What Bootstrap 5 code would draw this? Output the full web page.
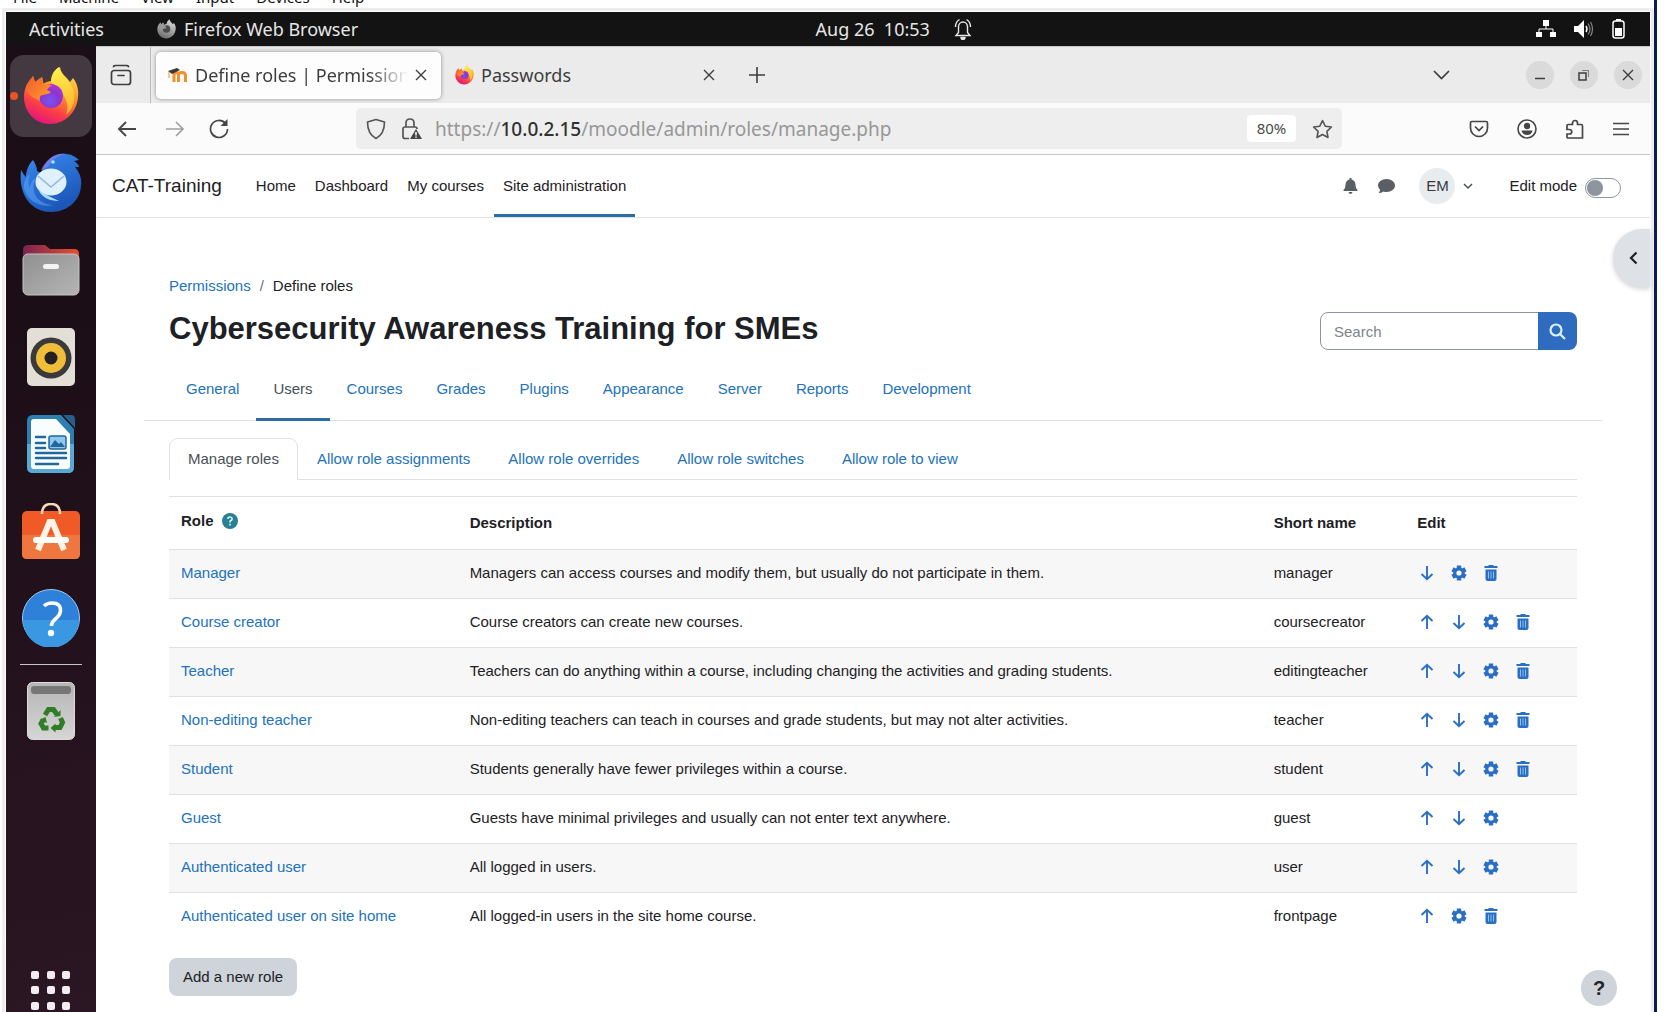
<!DOCTYPE html>
<html lang="en">
<head>
<meta charset="utf-8">
<meta name="viewport" content="width=device-width, initial-scale=1">
<title>Define roles | Permissions</title>
<link href="https://cdn.jsdelivr.net/npm/bootstrap@5.3.0/dist/css/bootstrap.min.css" rel="stylesheet">
<style>
  :root { --ui: "Noto Sans", "Open Sans", sans-serif; --page: "Liberation Sans", Arial, sans-serif; --brand: #2272bd; --line: #dee2e6; }
  body { font-family: var(--page); font-size: 15px; line-height: 22px; color: #1d2125; background: #fff; }
  svg { display: block; flex: none; }
  button { border: 0; background: none; padding: 0; color: inherit; }
  a { color: var(--brand); text-decoration: none; }

  /* virtual machine window */
  .vm { height: 100vh; margin: 0 7px 0 2px; border-right: 3px solid #0a1a55; overflow: hidden; }
  .vm-menu { height: 8px; padding-left: 11px; gap: 22px; font: 15px/22px var(--ui); }
  .vm-menu a { color: #111; }
  .vm-screen { min-height: 0; border: 3px solid #ededf0; border-bottom: 0; padding: 1px 1px 0; }

  /* desktop */
  .topbar { height: 34px; background: #131313; color: #e6e6e6; font: 18px/24px var(--ui); padding: 0 25px 0 23px; }
  .topbar .appname { margin-left: 53px; }
  .topbar .clock { left: 49%; gap: 24px; }
  .topbar .status { gap: 18px; }
  .dock { width: 90px; background: linear-gradient(170deg, #1c0e17 30%, #2b1623); padding-top: 9px; gap: 5px; }
  .dock a { width: 82px; height: 82px; border-radius: 14px; flex: none; position: relative; }
  .dock a.running { background: #443940; }
  .dock a.running::before { content: ""; position: absolute; left: 0; top: 37px; width: 8px; height: 8px; border-radius: 50%; background: #e95420; }
  .dock hr { width: 62px; height: 1px; margin: 0; border: 0; background: #c9c4c7; opacity: 1; flex: none; }
  .dock .apps { margin-top: auto; margin-bottom: -3px; height: 48px; }
  .workspace { min-height: 0; }
  .browser { min-width: 0; }

  /* browser */
  .tabstrip { height: 57px; background: #ebebeb; color: #3d3d3d; font: 18px/24px var(--ui); border-top: 1px solid #c8c8c8; }
  .tabstrip .overview { width: 55px; height: 100%; border-right: 1px solid #bdbdbd; padding-right: 4px; }
  .btab { height: 47px; border-radius: 5px; padding: 0 14px 0 12px; gap: 7px; }
  .btab.current { background: #fdfdfd; box-shadow: 0 0 4px rgba(0,0,0,.4); width: 285px; margin-left: 5px; }
  .btab.other { width: 288px; padding: 0 18px 0 10px; }
  .fade-text { overflow: hidden; white-space: nowrap; -webkit-mask-image: linear-gradient(90deg, #000 82%, transparent); mask-image: linear-gradient(90deg, #000 82%, transparent); }
  .winbtn { width: 28px; height: 28px; border-radius: 50%; background: #dadada; }
  .toolbar { height: 52px; background: #fbfbfb; border-bottom: 1px solid #c6c6c6; color: #464646; padding: 0 21px; }
  .urlbar { height: 41px; background: #eee; border-radius: 5px; width: 986px; font: 19px/24px var(--ui); color: #979797; padding: 0 9px 0 10px; }
  .urlbar .address { padding-left: 13px; }
  .urlbar b { font-weight: 500; color: #303030; }
  .zoomlevel { height: 27px; width: 49px; border-radius: 4px; background: #fff; color: #4b4b4b; font: 15px/27px var(--ui); }

  /* site */
  .site { min-height: 0; background: #fff; position: relative; }
  .sitenav { height: 63px; border-bottom: 1px solid var(--line); padding: 0 29px 0 16px; }
  .sitenav .brand { color: #1d2125; font-size: 19px; margin-right: 25px; }
  .sitenav .menu { gap: 1px; }
  .sitenav .menu a { color: #1d2125; padding: 0 9px; border-bottom: 3px solid transparent; border-top: 3px solid transparent; }
  .sitenav .menu a.active { border-bottom-color: #2e6da4; }
  .avatar { width: 36px; height: 36px; border-radius: 50%; background: #e9ecef; color: #343a40; }
  .form-switch .form-check-input { width: 36px; height: 20px; margin: 4px 0 0; border-color: #8f959e; background-image: url("data:image/svg+xml,%3csvg xmlns='http://www.w3.org/2000/svg' viewBox='-4 -4 8 8'%3e%3ccircle r='3.6' fill='%238f959e'/%3e%3c/svg%3e"); }
  .pagebody { padding: 57px 73px 0; }
  .crumbs { --bs-breadcrumb-divider-color: #6a737b; --bs-breadcrumb-item-active-color: #1d2125; --bs-breadcrumb-item-padding-x: 9px; }
  .titlerow { margin: 12px 0 4px; }
  .pagetitle { font-size: 31px; line-height: 40px; font-weight: 700; }
  .finder { width: 257px; }
  .finder .form-control { height: 38px; font-size: 15px; border-color: #8f959e; border-radius: 8px; padding: 0 13px; }
  .finder .form-control::placeholder { color: #7d848b; }
  .finder .btn { width: 39px; background: #2f6bbf; color: #d8f2ff; border-radius: 8px; padding: 0; }
  .sections { margin: 0 -25px; padding-left: 25px; border-bottom: 1px solid var(--line); height: 64px; }
  .sections a { padding: 0 17px; border-top: 3px solid transparent; border-bottom: 3px solid transparent; margin-bottom: -1px; }
  .sections a.active { color: #495057; border-bottom-color: #2e6da4; }
  .roletabs { margin-top: 17px; --bs-nav-tabs-border-radius: 9px; --bs-nav-link-padding-x: 18px; --bs-nav-link-padding-y: 9px; --bs-nav-link-color: var(--brand); --bs-nav-tabs-link-active-color: #495057; }
  .roles { margin: 16px 0 0; border-top: 1px solid var(--line); table-layout: fixed; --bs-table-color: #1d2125; --bs-table-striped-color: #1d2125; --bs-table-striped-bg: #f7f7f7; --bs-table-bg: transparent; }
  .roles th, .roles td { padding: 12px 12px 14px; border-color: var(--line); height: 49px; }
  .roles thead th { height: 53px; vertical-align: middle; padding-bottom: 12px; }
  .roles tbody tr:last-child > * { border-bottom: 0; }
  .roles .c1 { width: 20.5%; } .roles .c3 { width: 10.2%; } .roles .c4 { width: 12.2%; }
  .acts { gap: 12px; height: 22px; color: #2a6fc4; }
  .acts a { color: inherit; }
  .newrole { background: #ced4da; color: #1d2125; font-size: 15px; line-height: 22px; padding: 8px 14px; border-radius: 8px; border: 0; margin-top: 16px; }
  .drawer { position: absolute; right: 0; top: 74px; width: 37px; height: 58px; border-radius: 30px 0 0 30px; background: #dee2e6; box-shadow: 0 2px 5px rgba(0,0,0,.18); padding-left: 4px; }
  .helpbtn { position: absolute; right: 33px; bottom: 6px; width: 36px; height: 36px; border-radius: 50%; background: #ced4da; font-size: 20px; font-weight: 700; color: #22262a; }
</style>
<script src="https://cdn.jsdelivr.net/npm/bootstrap@5.3.0/dist/js/bootstrap.bundle.min.js" defer></script>
</head>
<body>
<svg width="0" height="0" class="position-absolute" aria-hidden="true">
  <defs>
    <linearGradient id="ffBody" x1=".8" y1="0" x2=".35" y2="1"><stop offset="0" stop-color="#ffe14a"/><stop offset=".4" stop-color="#ff9a2e"/><stop offset=".75" stop-color="#fb3d45"/><stop offset="1" stop-color="#e2167e"/></linearGradient>
    <linearGradient id="ffHead" x1="0" y1="0" x2="1" y2="1"><stop offset="0" stop-color="#f4582f"/><stop offset="1" stop-color="#ffa22b"/></linearGradient>
    <linearGradient id="ffFlame" x1=".5" y1="0" x2=".6" y2="1"><stop offset="0" stop-color="#fff04d"/><stop offset="1" stop-color="#ffb02c"/></linearGradient>
    <radialGradient id="ffGlobe" cx=".45" cy=".7" r=".7"><stop offset="0" stop-color="#7a53f0"/><stop offset=".6" stop-color="#8a35d0"/><stop offset="1" stop-color="#b833d8"/></radialGradient>
    <linearGradient id="grBody" x1=".7" y1="0" x2=".3" y2="1"><stop offset="0" stop-color="#ddd"/><stop offset="1" stop-color="#6a6a6a"/></linearGradient>
    <linearGradient id="tbBlue" x1="0" y1="0" x2=".5" y2="1"><stop offset="0" stop-color="#3b8cf0"/><stop offset="1" stop-color="#1b56b8"/></linearGradient>
    <linearGradient id="folder" x1="0" x2="1"><stop offset="0" stop-color="#7a2452"/><stop offset="1" stop-color="#e9502a"/></linearGradient>
    <linearGradient id="greyBox" x1="0" y1="0" x2="1" y2="1"><stop offset="0" stop-color="#909090"/><stop offset="1" stop-color="#b5b5b5"/></linearGradient>
    <linearGradient id="binBox" x1="0" y1="0" x2="0" y2="1"><stop offset="0" stop-color="#b5b5b5"/><stop offset="1" stop-color="#d6d6d6"/></linearGradient>
  </defs>
  <symbol id="firefox" viewBox="0 0 56 58">
    <path d="M1 30C1 22 4 16 8 12l2-3 2 6 7-5 1 7c3-2 6-3 8-3 1-6 4-11 9-14 1 7 6 9 10 15l3-4c4 5 6 12 5 19-1 15-13 27-28 27C13 57 1 46 1 30Z" fill="url(#ffBody)"/>
    <path d="M36 0c1 7 6 9 11 16 7 11 5 25-4 32 2-6 2-12-1-17-3-7-10-11-14-16 0-7 3-12 8-15Z" fill="url(#ffFlame)"/>
    <circle cx="28" cy="29" r="12" fill="url(#ffGlobe)"/>
    <path d="M3 20C5 15 8 12 10 9l2 6 7-5 2 8c3-1 5-1 8 1-2 0-4 2-5 4l4 2c-2 2-5 2-8 3-3 0-4 3-3 6-6-4-12-4-14-14Z" fill="url(#ffHead)"/>
  </symbol>
  <symbol id="firefox-grey" viewBox="0 0 56 58">
    <path d="M1 30C1 22 4 16 8 12l2-3 2 6 7-5 1 7c3-2 6-3 8-3 1-6 4-11 9-14 1 7 6 9 10 15l3-4c4 5 6 12 5 19-1 15-13 27-28 27C13 57 1 46 1 30Z" fill="url(#grBody)"/>
    <circle cx="28" cy="29" r="11" fill="#4b4b4b"/>
    <path d="M5 20l5-9 2 5 7-5 2 7c3-1 5-1 8 1-2 0-4 2-5 4l4 2c-2 2-5 2-8 3-6 4-15 0-15-8Z" fill="#999"/>
  </symbol>
  <symbol id="cross" viewBox="0 0 12 12"><path d="M1 1l10 10M11 1 1 11" stroke="currentColor" stroke-width="1.4" fill="none"/></symbol>
  <symbol id="up" viewBox="0 0 20 20"><path d="M10 17V4M4.500 9 10 3.700 15.500 9" fill="none" stroke="currentColor" stroke-width="1.900"/></symbol>
  <symbol id="down" viewBox="0 0 20 20"><path d="M10 3v13M4.500 11 10 16.300 15.500 11" fill="none" stroke="currentColor" stroke-width="1.900"/></symbol>
  <symbol id="gear" viewBox="0 0 20 20"><circle cx="10" cy="10" r="4.200" fill="none" stroke="currentColor" stroke-width="3.200"/><path d="M10 2.500v3M10 14.500v3M3.500 6.250l2.600 1.500M13.900 12.250l2.600 1.500M3.500 13.750l2.600-1.500M13.900 7.750l2.600-1.500" stroke="currentColor" stroke-width="4.400"/></symbol>
  <symbol id="trash" viewBox="0 0 20 20"><path d="M3.500 4h13M7.500 3h5" stroke="currentColor" stroke-width="2" fill="none"/><path d="M4.500 6.500h11V16q0 2-2 2h-7q-2 0-2-2Z" fill="currentColor"/><path d="M7.500 8.500v7M10 8.500v7M12.500 8.500v7" stroke="#8fc1f0" stroke-width="1"/></symbol>
</svg>

<div class="vm d-flex flex-column">
  <nav class="vm-menu d-flex align-items-end" aria-label="Machine menu">
    <a href="#">File</a><a href="#">Machine</a><a href="#">View</a><a href="#">Input</a><a href="#">Devices</a><a href="#">Help</a>
  </nav>
  <div class="vm-screen flex-grow-1 d-flex flex-column">
    <header class="topbar d-flex align-items-center position-relative flex-shrink-0">
      <span>Activities</span>
      <svg class="appname me-2" width="19" height="20"><use href="#firefox-grey"/></svg>
      <span>Firefox Web Browser</span>
      <div class="clock position-absolute top-50 translate-middle-y d-flex align-items-center">
        <span class="ps-1">Aug 26&nbsp; 10:53</span>
        <svg width="18" height="22" viewBox="0 0 18 22" fill="none" stroke="#e6e6e6" stroke-width="1.400"><path d="M2 17.500h14l-2.500-3V9c0-3-2-5-4.500-5S4.500 6 4.500 9v5.500ZM1.500 9c0-3 1.500-6 4-7.500M16.500 9c0-3-1.500-6-4-7.500"/><path d="M7 19.500a2 2 0 0 0 4 0Z" fill="#e6e6e6"/></svg>
      </div>
      <div class="status ms-auto d-flex align-items-center">
        <svg width="20" height="20" viewBox="0 0 20 20" fill="#fff"><path d="M7 1h6v6H7ZM0 13h6v5H0ZM14 13h6v5h-6Z"/><path d="M10 7v3M3 13v-3h14v3" fill="none" stroke="#fff"/></svg>
        <svg width="20" height="20" viewBox="0 0 20 20" fill="#fff"><path d="M0 7h4l6-6v18l-6-6H0Z"/><path d="M12 7q2 3 0 6" fill="none" stroke="#fff" stroke-width="1.500"/><path d="M14 4.500q4 5.500 0 11M16.500 3q4 7 0 14" fill="none" stroke="#888" stroke-width="1.200"/></svg>
        <svg width="13" height="20" viewBox="0 0 13 20"><rect x="1" y="2" width="11" height="17" rx="2.500" fill="none" stroke="#fff" stroke-width="1.500"/><path d="M4 0h5v2H4ZM3 9h7v8H3Z" fill="#fff"/></svg>
      </div>
    </header>

    <div class="workspace d-flex flex-grow-1">
      <nav class="dock d-flex flex-column align-items-center flex-shrink-0" aria-label="Dock">
        <a href="#" class="running d-flex align-items-center justify-content-center" aria-label="Firefox"><svg width="56" height="58"><use href="#firefox"/></svg></a>
        <a href="#" class="d-flex align-items-center justify-content-center" aria-label="Thunderbird">
          <svg width="62" height="60" viewBox="0 0 62 60"><path d="M1 17c2 3 3 5 5 7 0-7 3-13 7-17 2 3 4 7 4 11l4 2C25 6 36-1 46 1c5 0 10 3 13 6l-5 1c3 2 5 4 5 6h-4c5 6 7 12 6 19-1 15-14 26-30 26C13 59-2 44 1 17Z" fill="url(#tbBlue)"/><path d="M21 17C26 6 36-1 46 1c-8 1-14 6-18 13Z" fill="#9a7ff0" opacity=".6"/><circle cx="33" cy="9" r="1.800" fill="#9fe8ff"/><path d="M4 36c4 12 16 19 30 16-10 0-19-6-20-14-1-6 0-9 2-13-4 2-6 6-6 10-2-4-2-8 0-14C6 24 3 30 4 36Z" fill="#5aa5f8" opacity=".55"/><ellipse cx="31" cy="29" rx="15.500" ry="13.500" fill="#dff0ff"/><path d="M19 38q9 5 20 10c-10 0-17-4-20-10Z" fill="#a9dcff"/><path d="M18 23l13 11 13-11" fill="none" stroke="#93b9da" stroke-width="1.600"/></svg></a>
        <a href="#" class="d-flex align-items-center justify-content-center" aria-label="Files">
          <svg width="58" height="52" viewBox="0 0 58 52"><path d="M1 6q0-5 5-5h17l5 4h24q5 0 5 5v10H1Z" fill="url(#folder)"/><rect x="1" y="10" width="56" height="41" rx="5" fill="url(#greyBox)" stroke="#c4c4c4"/><rect x="21" y="20" width="16" height="5" rx="2.500" fill="#f4f4f4"/></svg></a>
        <a href="#" class="d-flex align-items-center justify-content-center" aria-label="Rhythmbox">
          <svg width="48" height="58" viewBox="0 0 48 58"><rect width="48" height="58" rx="5" fill="#e3ded6"/><circle cx="24" cy="30" r="20.500" fill="#3a3a3a"/><circle cx="24" cy="30" r="15" fill="#efbd3a"/><circle cx="24" cy="30" r="6.500" fill="#222"/></svg></a>
        <a href="#" class="d-flex align-items-center justify-content-center" aria-label="LibreOffice Writer">
          <svg width="48" height="58" viewBox="0 0 48 58"><path d="M6 0h28l13 14v38q0 6-6 6H6q-6 0-6-6V6q0-6 6-6Z" fill="#2d7fb0"/><path d="M0 29h47v23q0 6-6 6H6q-6 0-6-6Z" fill="#58a9d3"/><path d="M36 0h8q4 0 4 4v9Z" fill="#265f8c"/><path d="M7 4h22l14 15v32q0 3-3 3H7q-3 0-3-3V7q0-3 3-3Z" fill="#fafdff"/><path d="M9 22h9M9 28h9M9 33h9M9 38h30M9 43h30M9 49h22" stroke="#20689a" stroke-width="2.500" stroke-linecap="round"/><rect x="22" y="21" width="17" height="13" rx="2" fill="#8fc8ee" stroke="#20689a" stroke-width="1.500"/><path d="M23 32l5-7 4 4 2-2 4 5Z" fill="#20689a"/></svg></a>
        <a href="#" class="d-flex align-items-center justify-content-center" aria-label="Ubuntu Software">
          <svg width="58" height="56" viewBox="0 0 58 56"><rect y="8" width="58" height="48" rx="5" fill="#ef5a27"/><path d="M0 32h58v19q0 5-5 5H5q-5 0-5-5Z" fill="#f0763f"/><path d="M20 11q0-10 9-10t9 10" fill="none" stroke="#f5dcb8" stroke-width="2.500"/><path d="M16 47 27.500 19h3L42 47" fill="none" stroke="#fff3e6" stroke-width="6"/><path d="M14 37h30" stroke="#fff" stroke-width="6" stroke-linecap="round"/></svg></a>
        <a href="#" class="d-flex align-items-center justify-content-center" aria-label="Help">
          <svg width="58" height="58" viewBox="0 0 58 58"><circle cx="29" cy="29" r="28.500" fill="#2e80d8" stroke="#9cc9f2"/><path d="M1 31h56a28 28 0 0 1-56 0Z" fill="#3a98e2"/><path d="M22 17q3-3 8-3 9 0 8.500 8-.5 4-4.500 7.500-4.500 3.500-4.500 7.500" fill="none" stroke="#fff" stroke-width="3.500"/><circle cx="29" cy="44" r="3.200" fill="#fff"/></svg></a>
        <hr>
        <a href="#" class="d-flex align-items-center justify-content-center" aria-label="Trash">
          <svg width="48" height="58" viewBox="0 0 48 58"><rect x=".5" y=".5" width="47" height="57" rx="5" fill="url(#binBox)" stroke="#dcdcdc"/><rect x="4" y="4" width="40" height="8" rx="3" fill="#767676"/><g fill="none" stroke="#2f7d25" stroke-width="5"><path d="M18 33l3.500-5.500h5l3.500 5"/><path d="M33.500 36l2 4.500-2.500 5h-5"/><path d="M21.500 46h-5L14 41.500l2.500-4"/></g><path d="M27 35l6.500-1V28ZM28.500 41.500v9l-5-4.500ZM12.500 38l6-3 1.500 6Z" fill="#2f7d25"/></svg></a>
        <button class="apps" aria-label="Show applications">
          <svg width="40" height="40" viewBox="0 0 40 40" fill="#f1ecef"><rect width="8" height="8" rx="2"/><rect x="16" width="8" height="8" rx="2"/><rect x="31" width="8" height="8" rx="2"/><rect y="15" width="8" height="8" rx="2"/><rect x="16" y="15" width="8" height="8" rx="2"/><rect x="31" y="15" width="8" height="8" rx="2"/><rect y="31" width="8" height="8" rx="2"/><rect x="16" y="31" width="8" height="8" rx="2"/><rect x="31" y="31" width="8" height="8" rx="2"/></svg></button>
      </nav>

      <div class="browser flex-grow-1 d-flex flex-column">
        <div class="tabstrip d-flex align-items-center flex-shrink-0">
          <button class="overview d-flex align-items-center justify-content-center" aria-label="Recent browsing"><svg width="22" height="22" viewBox="0 0 22 22" fill="none" stroke="currentColor" stroke-width="1.700"><rect x="1.500" y="6.500" width="19" height="14" rx="2.500"/><path d="M3.500 2.500q.5-1 2-1h11q1.500 0 2 1M8 11.500h6" stroke-linecap="round"/></svg></button>
          <div class="btab current d-flex align-items-center">
            <svg width="20" height="16" viewBox="0 0 20 16"><path d="M6 15V8q0-2.500 2.200-2.500T10.500 8v7M10.500 8q0-2.500 3.500-2.500 3.500 0 3.500 3V15" fill="none" stroke="#f0912d" stroke-width="3"/><path d="M0 4 9 1l3 2-8 4Z" fill="#3f3a36"/><path d="M1 5v6" stroke="#f0912d"/></svg>
            <span class="fade-text flex-grow-1">Define roles | Permissions</span>
            <button aria-label="Close tab"><svg width="12" height="12"><use href="#cross"/></svg></button>
          </div>
          <div class="btab other d-flex align-items-center ms-1">
            <svg width="19" height="20"><use href="#firefox"/></svg>
            <span class="flex-grow-1">Passwords</span>
            <button aria-label="Close tab"><svg width="12" height="12"><use href="#cross"/></svg></button>
          </div>
          <button class="ms-2" aria-label="New tab"><svg class="ms-2" width="16" height="16" viewBox="0 0 16 16"><path d="M8 0v16M0 8h16" stroke="currentColor" stroke-width="1.600"/></svg></button>
          <button class="ms-auto me-5" aria-label="List all tabs"><svg class="me-4" width="17" height="10" viewBox="0 0 17 10"><path d="M1 1l7.500 7.500L16 1" fill="none" stroke="currentColor" stroke-width="1.700"/></svg></button>
          <div class="d-flex gap-3 ms-1 pe-2">
            <button class="winbtn d-flex align-items-center justify-content-center" aria-label="Minimize"><svg width="12" height="12" viewBox="0 0 12 12"><path d="M1 9.500h10" stroke="currentColor" stroke-width="1.500"/></svg></button>
            <button class="winbtn d-flex align-items-center justify-content-center" aria-label="Restore"><svg width="12" height="12" viewBox="0 0 12 12" fill="none" stroke="currentColor"><rect x="1" y="4" width="7" height="7" stroke-width="1.500"/><path d="M4 1.500h6.500V8" opacity=".6"/></svg></button>
            <button class="winbtn d-flex align-items-center justify-content-center" aria-label="Close"><svg width="12" height="12"><use href="#cross"/></svg></button>
          </div>
        </div>

        <div class="toolbar d-flex align-items-center flex-shrink-0">
          <button aria-label="Back"><svg width="20" height="18" viewBox="0 0 20 18"><path d="M19 9H2M9 2 2 9l7 7" fill="none" stroke="currentColor" stroke-width="1.900"/></svg></button>
          <button class="opacity-50 ms-4" aria-label="Forward"><svg class="ms-1" width="20" height="18" viewBox="0 0 20 18"><path d="M1 9h17M11 2l7 7-7 7" fill="none" stroke="currentColor" stroke-width="1.700"/></svg></button>
          <button class="ms-4" aria-label="Reload"><svg width="20" height="20" viewBox="0 0 20 20"><path d="M16.500 4.500A8.500 8.500 0 1 0 18.500 10" fill="none" stroke="currentColor" stroke-width="1.700"/><path d="M18.500 0v7h-7Z" fill="currentColor"/></svg></button>
          <div class="urlbar d-flex align-items-center mx-auto">
            <svg width="20" height="22" viewBox="0 0 20 22" fill="none" stroke="#555" stroke-width="1.600"><path d="M10 1.500 18.500 4c0 8-2 13-8.500 16.500C3.500 17 1.500 12 1.500 4Z" stroke-linejoin="round"/></svg>
            <svg class="ms-3" width="20" height="22" viewBox="0 0 20 22" fill="none" stroke="#555" stroke-width="1.700"><path d="M7 20.500H3q-2 0-2-2V11q0-2 2-2h10q2 0 2 2M4 9V5q0-4 4-4t4 4v4"/><path d="M14 11l6 10H8Z" fill="#444" stroke="none"/><path d="M14 14v3.500M14 18.500v1.200" stroke="#eee"/></svg>
            <span class="address flex-grow-1">https://<b>10.0.2.15</b>/moodle/admin/roles/manage.php</span>
            <button class="zoomlevel">80%</button>
            <button class="ms-3" aria-label="Bookmark"><svg width="21" height="20" viewBox="0 0 21 20"><path d="M10.500 1.500l2.700 5.700 6.200.8-4.500 4.300 1.100 6.200-5.500-3-5.500 3 1.100-6.200L1.600 8l6.200-.8Z" fill="none" stroke="#555" stroke-width="1.600" stroke-linejoin="round"/></svg></button>
          </div>
          <div class="d-flex align-items-center gap-4">
            <button aria-label="Pocket"><svg class="me-1" width="20" height="18" viewBox="0 0 20 18" fill="none" stroke="currentColor" stroke-width="1.700"><path d="M3 1.500h14q1.500 0 1.500 1.500v5a8.500 8.500 0 0 1-17 0V3Q1.500 1.500 3 1.500Z"/><path d="M6 6.500l4 4 4-4"/></svg></button>
            <button aria-label="Account"><svg class="me-1" width="20" height="20" viewBox="0 0 20 20"><circle cx="10" cy="10" r="9" fill="none" stroke="currentColor" stroke-width="1.600"/><circle cx="10" cy="7" r="3.200" fill="currentColor"/><path d="M4.500 11.500h11q-1 4.500-5.500 4.500t-5.500-4.500Z" fill="currentColor"/></svg></button>
            <button aria-label="Extensions"><svg width="20" height="20" viewBox="0 0 20 20"><path d="M2 7V6.500q0-1 1-1h4.500V4a2.500 2.500 0 0 1 5 0v1.500H16q1.500 0 1.500 1.500V19H3q-1 0-1-1v-3h2.500a2 2 0 0 0 0-4.500H2Z" fill="none" stroke="currentColor" stroke-width="1.700"/></svg></button>
            <button aria-label="Menu"><svg class="ms-1" width="16" height="14" viewBox="0 0 16 14"><path d="M0 1.500h16M0 7h16M0 12.500h16" stroke="currentColor" stroke-width="1.600"/></svg></button>
          </div>
        </div>

        <div class="site flex-grow-1">
          <nav class="sitenav d-flex align-items-center" aria-label="Site">
            <a class="brand" href="#">CAT-Training</a>
            <div class="menu d-flex align-self-stretch">
              <a class="d-flex align-items-center" href="#">Home</a><a class="d-flex align-items-center" href="#">Dashboard</a><a class="d-flex align-items-center" href="#">My courses</a><a class="active d-flex align-items-center" href="#">Site administration</a>
            </div>
            <div class="ms-auto d-flex align-items-center">
              <button aria-label="Notifications"><svg width="15" height="16" viewBox="0 0 15 16" fill="#5a5f65"><path d="M6.500 0h2v1.500Q12.500 2.500 12.500 7q0 3.500 2 5v1H.5v-1q2-1.500 2-5 0-4.500 4-5.500ZM5.500 14h4q-.5 2-2 2t-2-2Z"/></svg></button>
              <button class="ms-3 me-4" aria-label="Messages"><svg class="ms-1" width="17" height="16" viewBox="0 0 17 16" fill="#5a5f65"><path d="M8.500 1C13.500 1 17 4 17 7.500S13.500 14 8.500 14q-1.500 0-3-.5Q3.500 15 .5 15q1.500-1.500 1.500-3.500Q0 9.500 0 7.500C0 4 3.500 1 8.500 1Z"/></svg></button>
              <button class="d-flex align-items-center" aria-label="User menu"><span class="avatar d-flex align-items-center justify-content-center">EM</span><svg class="mx-2" width="10" height="7" viewBox="0 0 10 7"><path d="M1 1l4 4 4-4" fill="none" stroke="#495057" stroke-width="1.500"/></svg></button>
              <div class="form-check form-switch d-flex align-items-center gap-2 m-0 ms-4 ps-1">
                <label for="editmode">Edit mode</label><input class="form-check-input" type="checkbox" role="switch" id="editmode">
              </div>
            </div>
          </nav>

          <main class="pagebody">
            <ol class="crumbs breadcrumb mb-0"><li class="breadcrumb-item"><a href="#">Permissions</a></li><li class="breadcrumb-item active" aria-current="page">Define roles</li></ol>
            <div class="titlerow d-flex align-items-center justify-content-between">
              <h1 class="pagetitle mb-0 pb-1">Cybersecurity Awareness Training for SMEs</h1>
              <form class="finder input-group"><input class="form-control" type="search" placeholder="Search" aria-label="Search"><button class="btn d-flex align-items-center justify-content-center" type="button" aria-label="Submit search"><svg width="17" height="17" viewBox="0 0 17 17" fill="none" stroke="currentColor" stroke-width="2.200"><circle cx="7" cy="7" r="5.500"/><path d="M11 11l5 5"/></svg></button></form>
            </div>
            <nav class="sections d-flex" aria-label="Administration">
              <a class="d-flex align-items-center" href="#">General</a><a class="active d-flex align-items-center" href="#">Users</a><a class="d-flex align-items-center" href="#">Courses</a><a class="d-flex align-items-center" href="#">Grades</a><a class="d-flex align-items-center" href="#">Plugins</a><a class="d-flex align-items-center" href="#">Appearance</a><a class="d-flex align-items-center" href="#">Server</a><a class="d-flex align-items-center" href="#">Reports</a><a class="d-flex align-items-center" href="#">Development</a>
            </nav>
            <ul class="roletabs nav nav-tabs">
              <li class="nav-item"><a class="nav-link active" href="#">Manage roles</a></li>
              <li class="nav-item"><a class="nav-link" href="#">Allow role assignments</a></li>
              <li class="nav-item"><a class="nav-link" href="#">Allow role overrides</a></li>
              <li class="nav-item"><a class="nav-link" href="#">Allow role switches</a></li>
              <li class="nav-item"><a class="nav-link" href="#">Allow role to view</a></li>
            </ul>
            <table class="roles table table-striped">
              <thead><tr><th class="c1" scope="col"><div class="d-flex align-items-center gap-2 pb-1">Role <svg width="16" height="16" viewBox="0 0 16 16" role="img" aria-label="Help"><circle cx="8" cy="8" r="8" fill="#2b7f94"/><path d="M5.800 6q.2-2 2.200-2t2.200 1.800Q10.200 7 8 8.300v1.200M8 10.800v1.700" fill="none" stroke="#d9f6fb" stroke-width="1.600"/></svg></div></th><th scope="col">Description</th><th class="c3" scope="col">Short name</th><th class="c4" scope="col">Edit</th></tr></thead>
              <tbody>
                <tr><td><a href="#">Manager</a></td><td>Managers can access courses and modify them, but usually do not participate in them.</td><td>manager</td><td><div class="acts d-flex align-items-center"><a href="#" aria-label="Move down"><svg width="20" height="20"><use href="#down"/></svg></a><a href="#" aria-label="Edit"><svg width="20" height="20"><use href="#gear"/></svg></a><a href="#" aria-label="Delete"><svg width="20" height="20"><use href="#trash"/></svg></a></div></td></tr>
                <tr><td><a href="#">Course creator</a></td><td>Course creators can create new courses.</td><td>coursecreator</td><td><div class="acts d-flex align-items-center"><a href="#" aria-label="Move up"><svg width="20" height="20"><use href="#up"/></svg></a><a href="#" aria-label="Move down"><svg width="20" height="20"><use href="#down"/></svg></a><a href="#" aria-label="Edit"><svg width="20" height="20"><use href="#gear"/></svg></a><a href="#" aria-label="Delete"><svg width="20" height="20"><use href="#trash"/></svg></a></div></td></tr>
                <tr><td><a href="#">Teacher</a></td><td>Teachers can do anything within a course, including changing the activities and grading students.</td><td>editingteacher</td><td><div class="acts d-flex align-items-center"><a href="#" aria-label="Move up"><svg width="20" height="20"><use href="#up"/></svg></a><a href="#" aria-label="Move down"><svg width="20" height="20"><use href="#down"/></svg></a><a href="#" aria-label="Edit"><svg width="20" height="20"><use href="#gear"/></svg></a><a href="#" aria-label="Delete"><svg width="20" height="20"><use href="#trash"/></svg></a></div></td></tr>
                <tr><td><a href="#">Non-editing teacher</a></td><td>Non-editing teachers can teach in courses and grade students, but may not alter activities.</td><td>teacher</td><td><div class="acts d-flex align-items-center"><a href="#" aria-label="Move up"><svg width="20" height="20"><use href="#up"/></svg></a><a href="#" aria-label="Move down"><svg width="20" height="20"><use href="#down"/></svg></a><a href="#" aria-label="Edit"><svg width="20" height="20"><use href="#gear"/></svg></a><a href="#" aria-label="Delete"><svg width="20" height="20"><use href="#trash"/></svg></a></div></td></tr>
                <tr><td><a href="#">Student</a></td><td>Students generally have fewer privileges within a course.</td><td>student</td><td><div class="acts d-flex align-items-center"><a href="#" aria-label="Move up"><svg width="20" height="20"><use href="#up"/></svg></a><a href="#" aria-label="Move down"><svg width="20" height="20"><use href="#down"/></svg></a><a href="#" aria-label="Edit"><svg width="20" height="20"><use href="#gear"/></svg></a><a href="#" aria-label="Delete"><svg width="20" height="20"><use href="#trash"/></svg></a></div></td></tr>
                <tr><td><a href="#">Guest</a></td><td>Guests have minimal privileges and usually can not enter text anywhere.</td><td>guest</td><td><div class="acts d-flex align-items-center"><a href="#" aria-label="Move up"><svg width="20" height="20"><use href="#up"/></svg></a><a href="#" aria-label="Move down"><svg width="20" height="20"><use href="#down"/></svg></a><a href="#" aria-label="Edit"><svg width="20" height="20"><use href="#gear"/></svg></a></div></td></tr>
                <tr><td><a href="#">Authenticated user</a></td><td>All logged in users.</td><td>user</td><td><div class="acts d-flex align-items-center"><a href="#" aria-label="Move up"><svg width="20" height="20"><use href="#up"/></svg></a><a href="#" aria-label="Move down"><svg width="20" height="20"><use href="#down"/></svg></a><a href="#" aria-label="Edit"><svg width="20" height="20"><use href="#gear"/></svg></a></div></td></tr>
                <tr><td><a href="#">Authenticated user on site home</a></td><td>All logged-in users in the site home course.</td><td>frontpage</td><td><div class="acts d-flex align-items-center"><a href="#" aria-label="Move up"><svg width="20" height="20"><use href="#up"/></svg></a><a href="#" aria-label="Edit"><svg width="20" height="20"><use href="#gear"/></svg></a><a href="#" aria-label="Delete"><svg width="20" height="20"><use href="#trash"/></svg></a></div></td></tr>
              </tbody>
            </table>
            <button class="newrole" type="button">Add a new role</button>
          </main>
          <button class="drawer d-flex align-items-center justify-content-center" aria-label="Open block drawer"><svg width="9" height="14" viewBox="0 0 9 14"><path d="M7.500 1.500 2 7l5.500 5.500" fill="none" stroke="#1d2125" stroke-width="2.200"/></svg></button>
          <button class="helpbtn" aria-label="Help">?</button>
        </div>
      </div>
    </div>
  </div>
</div>
</body>
</html>
